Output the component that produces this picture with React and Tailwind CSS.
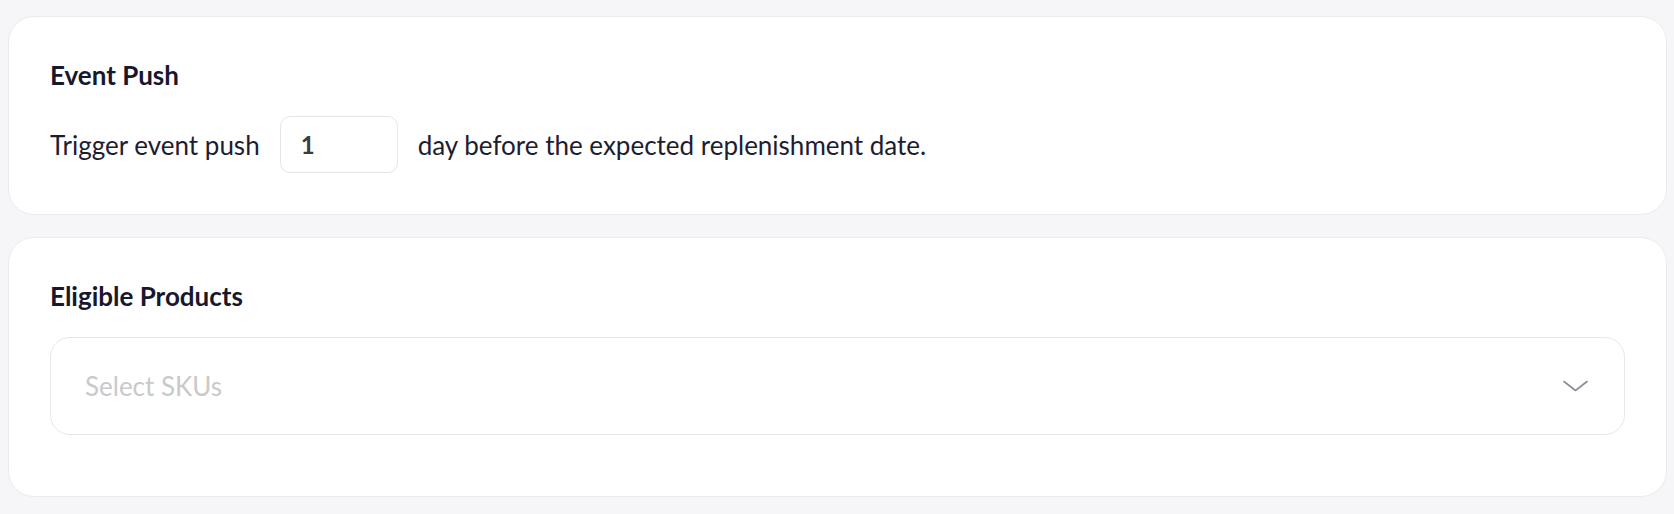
const Chevron = () => (
  <svg width="25" height="12" viewBox="0 0 25 12" fill="none">
    <path d="M1 1.5 L12.5 10.5 L24 1.5" stroke="#8c8c98" strokeWidth="1.6" strokeLinecap="round" strokeLinejoin="round" />
  </svg>
);

const Card = ({ title, children, bottom }) => (
  <section className={`rounded-[26px] border border-[#ebebee] bg-white px-[41px] pt-10 ${bottom}`}>
    <h2 className="text-[26px] leading-[36px] font-bold text-[#17172d]">{title}</h2>
    <div className="mt-[23px]">{children}</div>
  </section>
);

export default function App() {
  return (
    <div
      className="min-h-[514px] bg-[#f6f6f8] pt-4 pl-2 pr-[7px] pb-4 flex flex-col gap-[22px]"
      style={{ fontFamily: "Lato, 'Noto Sans', sans-serif" }}
    >
      {/* EVENT PUSH */}
      <Card title="Event Push" bottom="pb-[41px]">
        <div className="flex items-center text-[26px] leading-[36px] text-[#1d1d31]">
          <span>Trigger event push</span>
          <input
            type="text"
            defaultValue="1"
            className="mx-[20px] h-[57px] w-[118px] rounded-[10px] border border-[#e6e6e9] bg-white pl-5 text-[24px] font-bold text-[#3b3b40] outline-none"
            style={{ fontFamily: "Lato, sans-serif" }}
          />
          <span>day before the expected replenishment date.</span>
        </div>
      </Card>

      {/* ELIGIBLE PRODUCTS */}
      <Card title="Eligible Products" bottom="pb-[61px]">
        <button
          type="button"
          className="flex h-[98px] w-full items-center justify-between rounded-[20px] border border-[#e8e8eb] bg-white pl-[34px] pr-[36px] text-left"
        >
          <span className="text-[26px] leading-[36px] text-[#c9c9cc]">Select SKUs</span>
          <Chevron />
        </button>
      </Card>
    </div>
  );
}
